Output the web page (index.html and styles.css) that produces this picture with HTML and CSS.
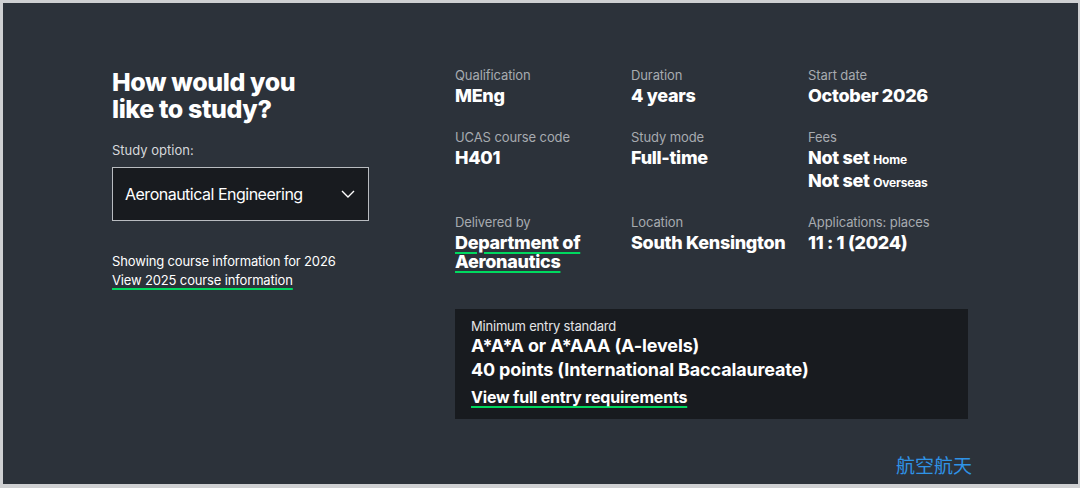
FILE: index.html
```html
<!DOCTYPE html>
<html lang="en">
<head>
<meta charset="UTF-8" />
<meta name="viewport" content="width=device-width, initial-scale=1" />
<title>How would you like to study?</title>
<link rel="stylesheet" href="styles.css">
</head>
<body>
  <section class="study-panel" aria-label="Study options">
    <div class="study-main">
      <div class="study-left">
        <h2 class="study-title">How would you<br>like to study?</h2>
        <label class="study-label" for="study-option">Study option:</label>
        <div class="select-box" id="study-option" role="button" tabindex="0">
          <span>Aeronautical Engineering</span>
          <svg class="chevron" width="14" height="8" viewBox="0 0 14 8" aria-hidden="true">
            <polyline points="1,1 7,7 13,1" fill="none" stroke="#ffffff" stroke-width="1.4" />
          </svg>
        </div>
        <p class="year-note">
          Showing course information for 2026<br>
          <a href="#" class="green-link">View 2025 course information</a>
        </p>
      </div>

      <div class="study-right">
        <dl class="facts">
          <div class="fact">
            <dt>Qualification</dt>
            <dd>MEng</dd>
          </div>
          <div class="fact">
            <dt>Duration</dt>
            <dd>4 years</dd>
          </div>
          <div class="fact">
            <dt>Start date</dt>
            <dd>October 2026</dd>
          </div>
          <div class="fact">
            <dt>UCAS course code</dt>
            <dd>H401</dd>
          </div>
          <div class="fact">
            <dt>Study mode</dt>
            <dd>Full-time</dd>
          </div>
          <div class="fact">
            <dt>Fees</dt>
            <dd>Not set <small>Home</small></dd>
            <dd class="fee-line">Not set <small>Overseas</small></dd>
          </div>
          <div class="fact">
            <dt>Delivered by</dt>
            <dd class="multi"><a href="#" class="green-link">Department of<br>Aeronautics</a></dd>
          </div>
          <div class="fact">
            <dt>Location</dt>
            <dd>South Kensington</dd>
          </div>
          <div class="fact">
            <dt>Applications: places</dt>
            <dd>11 : 1 (2024)</dd>
          </div>
        </dl>

        <div class="entry-box">
          <div class="entry-label">Minimum entry standard</div>
          <div class="entry-value">A*A*A or A*AAA (A-levels)</div>
          <div class="entry-value">40 points (International Baccalaureate)</div>
          <a href="#" class="green-link entry-link">View full entry requirements</a>
        </div>
      </div>
    </div>

    <div class="caption">航空航天</div>
  </section>
</body>
</html>
```

FILE: styles.css
```css
/* Reset and base */
* {
  box-sizing: border-box;
}
body {
  margin: 0;
  padding: 3px 2px 4px 3px;
  background: #cfd0d2;
  font-family: 'Inter', "Noto Sans", "Liberation Sans", sans-serif;
  color: #ffffff;
}

.study-panel {
  display: flex;
  flex-direction: column;
  height: 481px;
  padding: 63px 106px 7px 109px;
  background: #2c323a;
}

.study-main {
  display: flex;
  align-items: flex-start;
}

/* Left column */
.study-left {
  width: 257px;
  margin-right: 86px;
  padding-top: 3px;
}

.study-title {
  margin: 0;
  font-size: 25px;
  line-height: 27px;
  font-weight: 800;
  letter-spacing: -0.4px;
}

.study-label {
  display: block;
  margin-top: 18px;
  font-size: 13px;
  line-height: 18px;
  color: #d6d8db;
}

.select-box {
  display: flex;
  justify-content: space-between;
  align-items: center;
  height: 54px;
  margin-top: 8px;
  padding: 0 13px 0 12px;
  background: #181b1f;
  border: 1px solid #b9bcc0;
  font-size: 16px;
  letter-spacing: -0.5px;
  cursor: pointer;
}

.chevron {
  display: block;
}

.year-note {
  margin: 31px 0 0;
  font-size: 13px;
  line-height: 19px;
  letter-spacing: -0.15px;
}

.green-link {
  color: #ffffff;
  text-decoration: underline;
  text-decoration-color: #00d95f;
  text-decoration-thickness: 2px;
  text-underline-offset: 3px;
}

/* Right column */
.study-right {
  width: 513px;
}

.facts {
  display: grid;
  grid-template-columns: 176px 177px 160px;
  row-gap: 22px;
  margin: 0;
}

.fact dt {
  font-size: 13px;
  line-height: 18px;
  color: #a7abb0;
  letter-spacing: -0.1px;
}

.fact dd {
  margin: 2px 0 0;
  font-size: 18px;
  line-height: 20px;
  font-weight: 800;
  letter-spacing: -0.3px;
  white-space: nowrap;
}

.fact dd.multi {
  line-height: 19px;
}

.fact dd small {
  font-size: 12px;
  line-height: 1;
  font-weight: 700;
  letter-spacing: -0.2px;
}

.fact dd.fee-line {
  margin-top: 3px;
}

.entry-box {
  margin-top: 38px;
  padding: 9px 16px 12px;
  background: #181b1f;
}

.entry-label {
  font-size: 13px;
  line-height: 16px;
  letter-spacing: -0.2px;
  color: #e4e5e7;
}

.entry-value {
  font-size: 18px;
  line-height: 24px;
  font-weight: 700;
  letter-spacing: -0.15px;
}

.entry-link {
  display: inline-block;
  margin-top: 5px;
  font-size: 16px;
  line-height: 20px;
  font-weight: 700;
  letter-spacing: -0.2px;
}

/* Bottom caption */
.caption {
  margin-top: auto;
  text-align: right;
  font-family: "Noto Sans CJK SC", sans-serif;
  font-size: 19px;
  line-height: 24px;
  color: #2f93e6;
}
```
